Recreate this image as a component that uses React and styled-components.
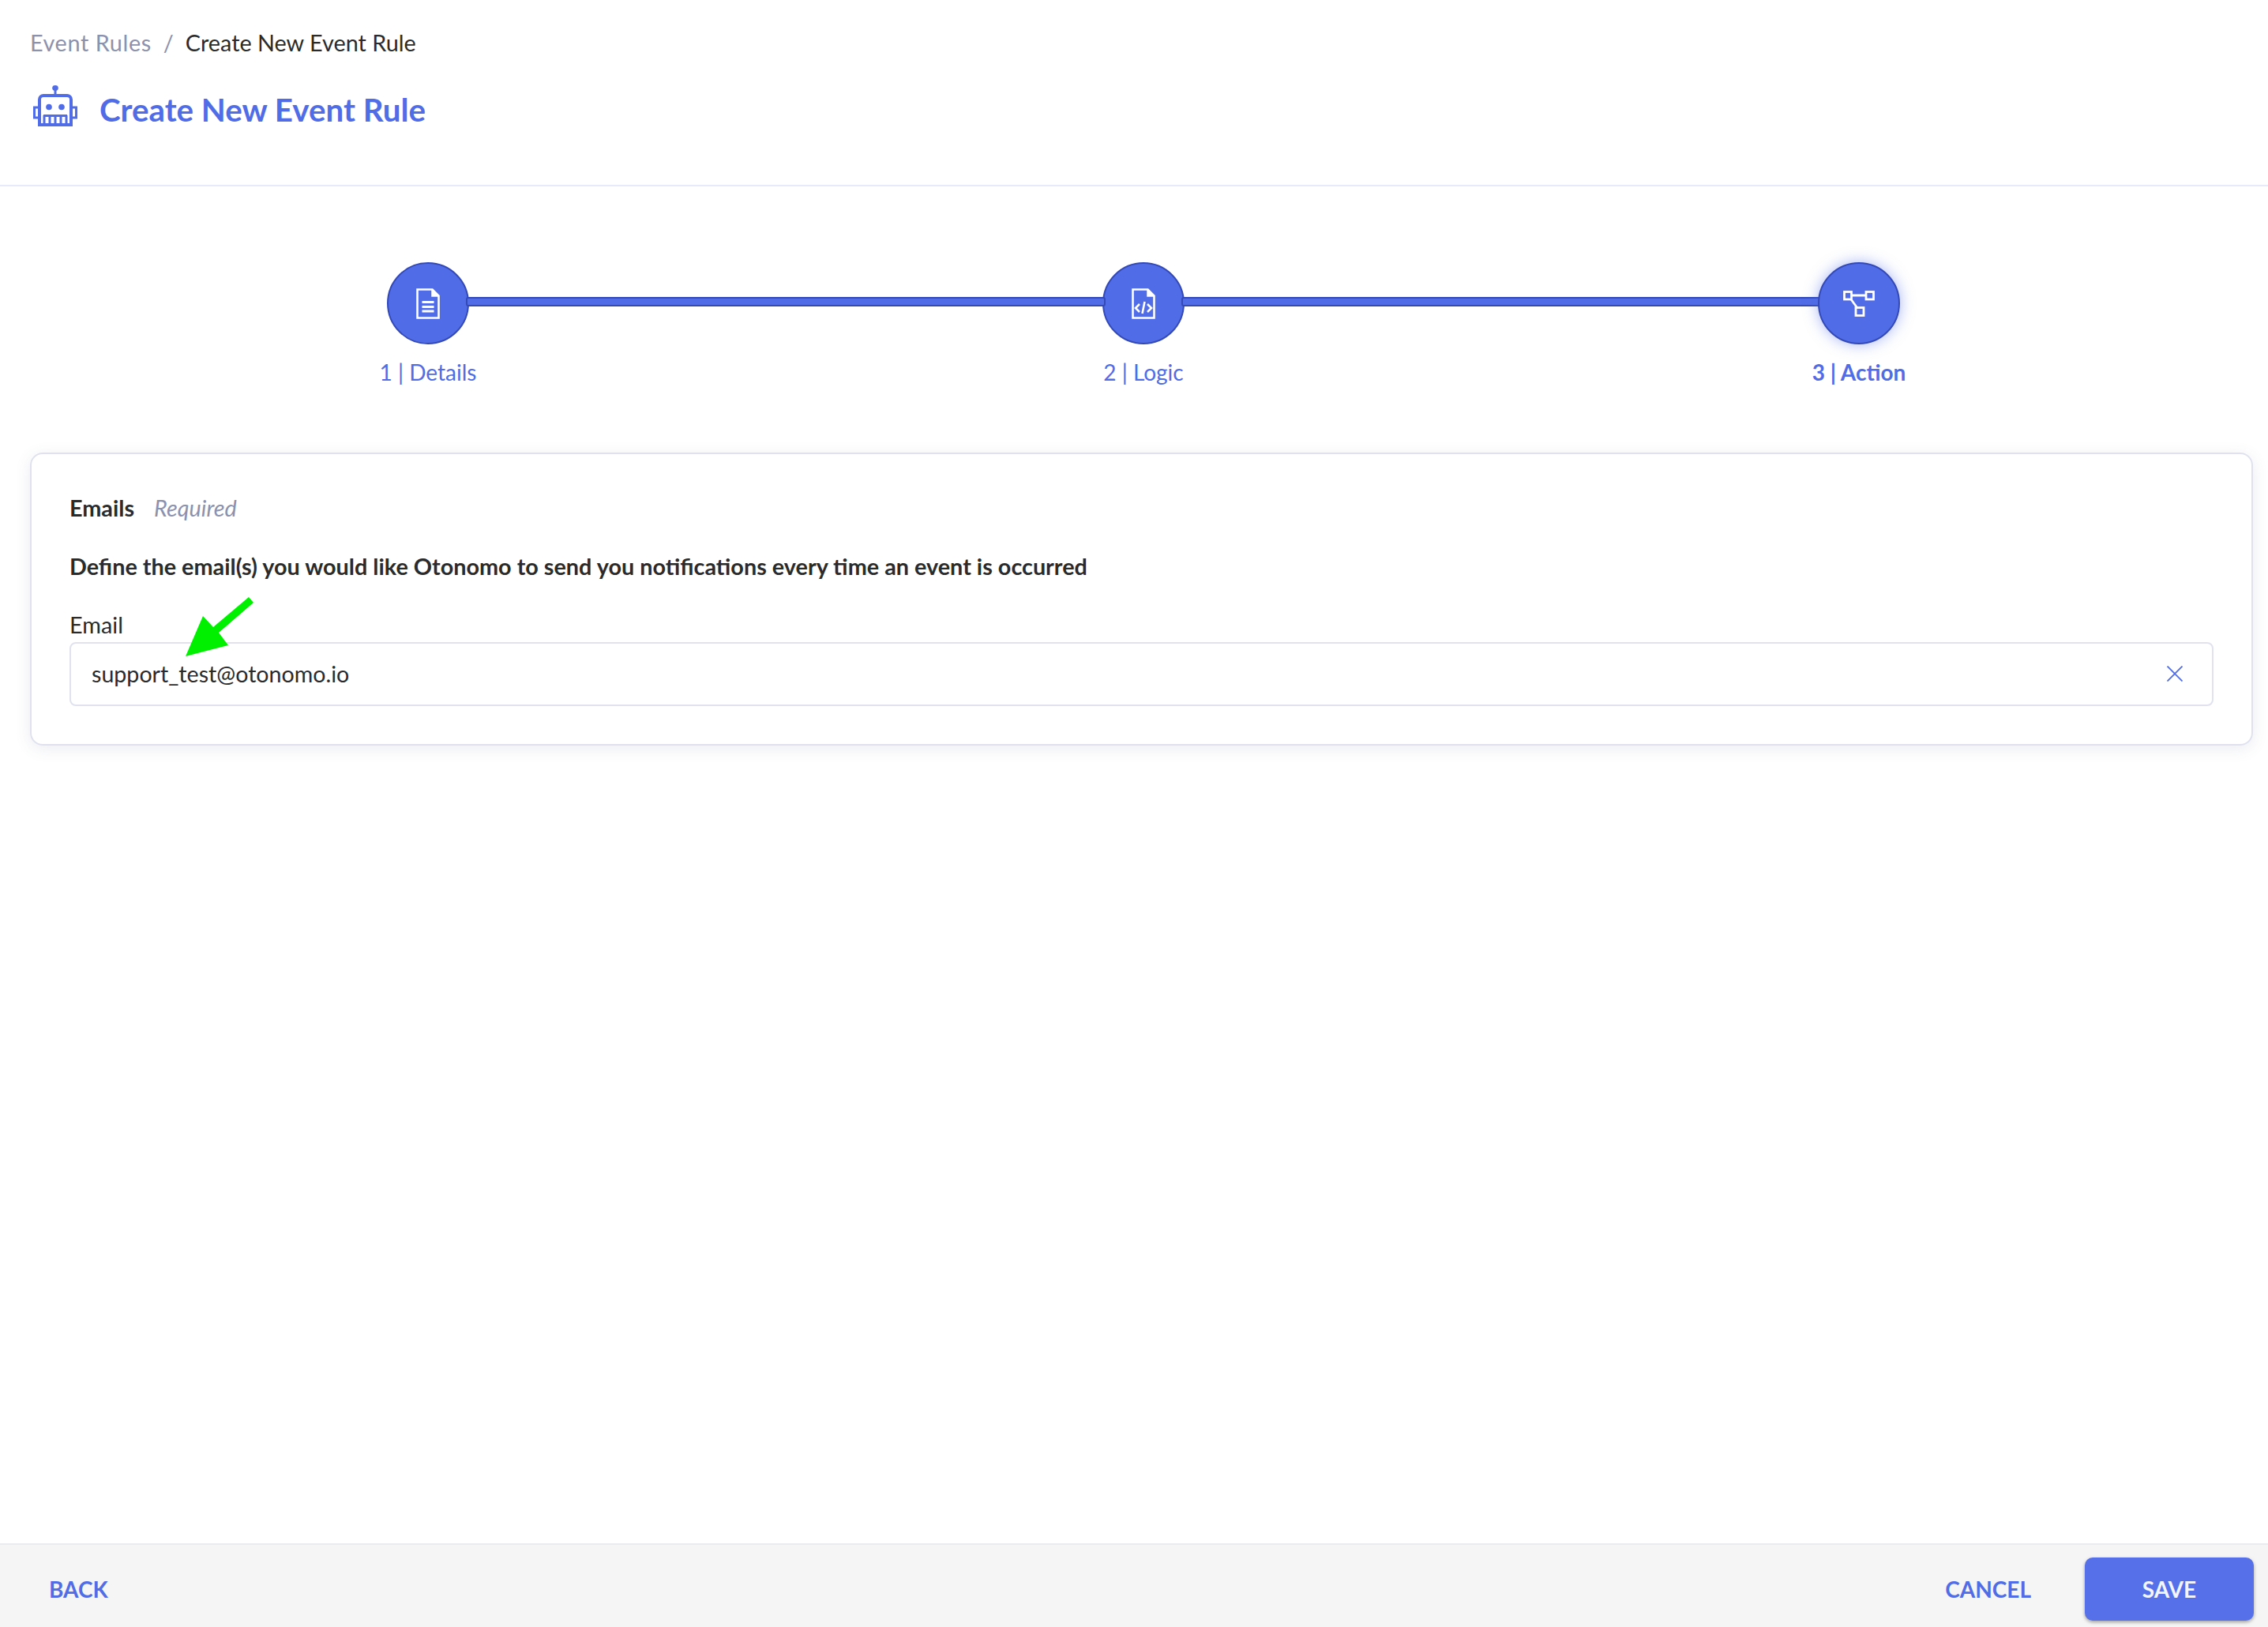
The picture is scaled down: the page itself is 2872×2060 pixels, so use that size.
import React from 'react'
import styled, { createGlobalStyle } from 'styled-components'

const blue = '#506ce6'
const dark = '#2b2b2b'
const muted = '#8c91ad'

const GlobalStyle = createGlobalStyle`
  html, body {
    margin: 0;
    background: #fff;
    font-family: Lato, "Open Sans", sans-serif;
    color: ${dark};
  }
  * {
    box-sizing: border-box;
  }
`

const Page = styled.div`
  position: relative;
  height: 2060px;
  display: flex;
  flex-direction: column;
`

const Header = styled.header`
  height: 236px;
  padding: 34px 38px 0;
  border-bottom: 2px solid #e6eafb;
`

const Breadcrumbs = styled.nav`
  display: flex;
  align-items: center;
  gap: 15px;
  height: 40px;
  font-size: 28.8px;
  color: ${muted};
`

const Parent = styled.span`
  letter-spacing: 0.6px;
`

const Current = styled.span`
  color: ${dark};
`

const TitleRow = styled.div`
  display: flex;
  align-items: flex-start;
  gap: 28px;
  margin-top: 34px;
  padding-left: 4px;
`

const Title = styled.h1`
  margin: 3px 0 0;
  font-size: 40.3px;
  line-height: 56px;
  font-weight: 700;
  color: ${blue};
`

const Main = styled.main`
  flex: 1;
  padding: 0 19px 0 38px;
`

const Stepper = styled.div`
  display: flex;
  align-items: flex-start;
  padding: 96px 447px 0 452px;
  margin-bottom: 85px;
`

const Step = styled.div`
  flex: none;
  width: 104px;
  display: flex;
  flex-direction: column;
  align-items: center;
  position: relative;
  z-index: ${(p) => (p.$active ? 2 : 0)};
`

const Circle = styled.div`
  width: 104px;
  height: 104px;
  border-radius: 50%;
  background: ${blue};
  border: 2px solid #3349b8;
  display: flex;
  align-items: center;
  justify-content: center;
  box-shadow: ${(p) => (p.$active ? '0 0 18px rgba(80, 108, 230, 0.5)' : 'none')};
`

const StepLabel = styled.span`
  margin-top: 18px;
  font-size: 28px;
  line-height: 34px;
  white-space: nowrap;
  color: ${blue};
  font-weight: ${(p) => (p.$active ? 700 : 400)};
`

const Connector = styled.div`
  flex: 1;
  height: 12px;
  margin: 44px -4px 0;
  position: relative;
  z-index: 1;
  background: ${blue};
  border: 2px solid #3349b8;
  border-radius: 3px;
`

const Card = styled.section`
  height: 371px;
  padding: 48px 48px 0;
  border: 2px solid #dfe2ee;
  border-radius: 16px;
  box-shadow: 0 4px 20px rgba(70, 80, 140, 0.11);
`

const CardHead = styled.div`
  display: flex;
  align-items: center;
  gap: 25px;
  height: 40px;
`

const CardName = styled.span`
  font-size: 28.8px;
  font-weight: 700;
`

const Required = styled.span`
  font-size: 28.8px;
  font-style: italic;
  color: ${muted};
`

const Description = styled.p`
  margin: 34px 0 0;
  font-size: 28.8px;
  line-height: 40px;
  font-weight: 700;
`

const FieldLabel = styled.label`
  display: block;
  margin-top: 34px;
  font-size: 28.8px;
  line-height: 40px;
`

const InputBox = styled.div`
  height: 81px;
  margin-top: 2px;
  padding: 0 37px 2px 26px;
  display: flex;
  align-items: center;
  justify-content: space-between;
  border: 2px solid #e0e3ef;
  border-radius: 8px;
  font-size: 28.6px;
`

const Footer = styled.footer`
  height: 106px;
  flex: none;
  display: flex;
  align-items: flex-start;
  justify-content: space-between;
  padding: 16px 18px 0 62px;
  background: #f5f5f6;
  border-top: 2px solid #e8ecf1;
`

const TextButton = styled.button`
  height: 80px;
  padding: 0;
  border: 0;
  background: none;
  font-family: inherit;
  font-size: 28px;
  font-weight: 700;
  color: ${blue};
`

const FooterActions = styled.div`
  display: flex;
  gap: 68px;
`

const SaveButton = styled.button`
  width: 214px;
  height: 80px;
  border: 0;
  border-radius: 10px;
  background: #5570e8;
  color: #f2f4fe;
  font-family: inherit;
  font-size: 28px;
  font-weight: 700;
  box-shadow: 0 2px 4px rgba(0, 0, 0, 0.35);
`

const ArrowMark = styled.svg`
  position: absolute;
  left: 230px;
  top: 750px;
  z-index: 5;
`

const RobotIcon = () => (
  <svg width="56" height="52" viewBox="0 0 56 52" fill="none" stroke={blue} strokeWidth="4">
    <ellipse cx="28" cy="3.4" rx="3.8" ry="3.4" fill={blue} stroke="none" />
    <path d="M28 6v6" strokeWidth="3" />
    <path d="M8 50V18a5 5 0 0 1 5-5h30a5 5 0 0 1 5 5v32z" />
    <path d="M7 41H1.5V28H7M49 41h5.5V28H49" strokeWidth="3" />
    <circle cx="20" cy="27.5" r="3.8" fill={blue} stroke="none" />
    <circle cx="36" cy="27.5" r="3.8" fill={blue} stroke="none" />
    <path d="M13 38.5h30M14 38v12M21 38v12M28 38v12M35 38v12M42 38v12" strokeWidth="3" />
  </svg>
)

const DetailsIcon = () => (
  <svg width="30" height="39" viewBox="0 0 30 39" fill="none" stroke="#fff" strokeWidth="2.6">
    <path d="M1.5 1.5h19l8 8v28h-27z" />
    <path d="M20 2v8h8" fill="#fff" strokeWidth="1.5" />
    <path d="M7.5 17.5h15M7.5 23.5h15M7.5 29h15" strokeWidth="2.8" />
  </svg>
)

const LogicIcon = () => (
  <svg width="30" height="39" viewBox="0 0 30 39" fill="none" stroke="#fff" strokeWidth="2.6">
    <path d="M1.5 1.5h19l8 8v28h-27z" />
    <path d="M20 2v8h8" fill="#fff" strokeWidth="1.5" />
    <path d="M10 20l-5 5 5 5M20 20l5 5-5 5M16.5 17l-3 15" />
  </svg>
)

const ActionIcon = () => (
  <svg width="40" height="33" viewBox="0 0 40 33" fill="none" stroke="#fff" strokeWidth="2.8">
    <rect x="1.5" y="1.5" width="9" height="9.5" />
    <rect x="29" y="1.5" width="9.5" height="9.5" />
    <rect x="16" y="21.5" width="10" height="10" />
    <path d="M10.5 6h18.5M10 11l8 11" />
  </svg>
)

const CloseIcon = () => (
  <svg width="20" height="20" viewBox="0 0 20 20" stroke={blue} strokeWidth="1.8" fill="none">
    <path d="M0.5 0.5l19 19M19.5 0.5l-19 19" />
  </svg>
)

const steps = [
  { label: '1 | Details', icon: <DetailsIcon /> },
  { label: '2 | Logic', icon: <LogicIcon /> },
  { label: '3 | Action', icon: <ActionIcon />, active: true },
]

export default function App() {
  return (
    <Page>
      <GlobalStyle />
      <Header>
        <Breadcrumbs>
          <Parent>Event Rules</Parent>
          <span>/</span>
          <Current>Create New Event Rule</Current>
        </Breadcrumbs>
        <TitleRow>
          <RobotIcon />
          <Title>Create New Event Rule</Title>
        </TitleRow>
      </Header>

      <Main>
        <Stepper>
          {steps.map((step, i) => (
            <React.Fragment key={step.label}>
              {i > 0 && <Connector />}
              <Step $active={step.active}>
                <Circle $active={step.active}>{step.icon}</Circle>
                <StepLabel $active={step.active}>{step.label}</StepLabel>
              </Step>
            </React.Fragment>
          ))}
        </Stepper>

        <Card>
          <CardHead>
            <CardName>Emails</CardName>
            <Required>Required</Required>
          </CardHead>
          <Description>
            Define the email(s) you would like Otonomo to send you notifications every time an event is occurred
          </Description>
          <FieldLabel>Email</FieldLabel>
          <InputBox>
            <span>support_test@otonomo.io</span>
            <CloseIcon />
          </InputBox>
        </Card>
      </Main>

      <Footer>
        <TextButton>BACK</TextButton>
        <FooterActions>
          <TextButton>CANCEL</TextButton>
          <SaveButton>SAVE</SaveButton>
        </FooterActions>
      </Footer>

      <ArrowMark width="95" height="85" viewBox="230 750 95 85">
        <path d="M315 756l6 7-44 38 12 16-54 14 22-51 13 14z" fill="#00f000" />
      </ArrowMark>
    </Page>
  )
}
